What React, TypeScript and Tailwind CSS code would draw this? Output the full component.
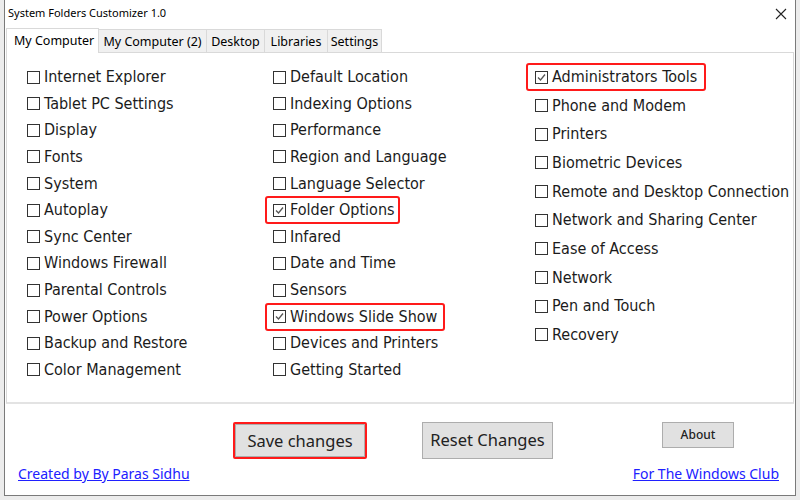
import React from "react";

const col1 = [
  "Internet Explorer",
  "Tablet PC Settings",
  "Display",
  "Fonts",
  "System",
  "Autoplay",
  "Sync Center",
  "Windows Firewall",
  "Parental Controls",
  "Power Options",
  "Backup and Restore",
  "Color Management",
];

type It = { label: string; checked?: boolean; hl?: string };

const col2: It[] = [
  { label: "Default Location" },
  { label: "Indexing Options" },
  { label: "Performance" },
  { label: "Region and Language" },
  { label: "Language Selector" },
  { label: "Folder Options", checked: true, hl: "left-[-8px] right-[-5px]" },
  { label: "Infared" },
  { label: "Date and Time" },
  { label: "Sensors" },
  { label: "Windows Slide Show", checked: true, hl: "left-[-8px] right-[-8px]" },
  { label: "Devices and Printers" },
  { label: "Getting Started" },
];

const col3: It[] = [
  { label: "Administrators Tools", checked: true, hl: "left-[-9px] right-[-9px]" },
  { label: "Phone and Modem" },
  { label: "Printers" },
  { label: "Biometric Devices" },
  { label: "Remote and Desktop Connection" },
  { label: "Network and Sharing Center" },
  { label: "Ease of Access" },
  { label: "Network" },
  { label: "Pen and Touch" },
  { label: "Recovery" },
];

function Box({ checked }: { checked?: boolean }) {
  return (
    <span className="w-[13px] h-[13px] border border-[#333333] bg-white shrink-0 flex items-center justify-center">
      {checked && (
        <svg width="11" height="11" viewBox="0 0 11 11">
          <path d="M2 5.5 L4.5 8 L9 2.5" fill="none" stroke="#555555" strokeWidth="1.3" />
        </svg>
      )}
    </span>
  );
}

function Item({ it, tall }: { it: It; tall?: boolean }) {
  return (
    <div className={`relative inline-flex items-center ${tall ? "h-[28.67px]" : "h-[26.64px]"}`}>
      {it.hl && (
        <div
          className={`absolute top-1/2 -translate-y-1/2 h-[28px] border-[2.5px] border-[#ff1a1a] rounded-[3px] ${it.hl}`}
        />
      )}
      <Box checked={it.checked} />
      <span className="ml-[4px] text-[16px] leading-none text-[#1b1b1b] whitespace-nowrap font-['DejaVu_Sans_Condensed','DejaVu_Sans',sans-serif] [font-stretch:condensed]">
        {it.label}
      </span>
    </div>
  );
}

export default function App() {
  const tabs = [
    { t: "My Computer (2)", w: "w-[108px]" },
    { t: "Desktop", w: "w-[58px]" },
    { t: "Libraries", w: "w-[63px]" },
    { t: "Settings", w: "w-[54px]" },
  ];
  return (
    <div className="w-[800px] h-[500px] bg-[#ececec] font-['Noto_Sans',sans-serif]">
      <div className="ml-[4px] w-[792px] h-[496px] border-x border-b border-[#7a7a7a] bg-white flex flex-col">
        {/* title bar */}
        <div className="h-[27px] flex items-center justify-between pl-[3px] pr-[8px]">
          <span className="text-[11px] text-black">System Folders Customizer 1.0</span>
          <svg width="12" height="12" viewBox="0 0 12 12">
            <path d="M1 1 L11 11 M11 1 L1 11" stroke="#222" strokeWidth="1.1" />
          </svg>
        </div>
        {/* tabs */}
        <div className="h-[25px] flex items-end pl-[1px] text-[12.5px] text-black">
          <div className="w-[93px] h-[25px] bg-white border-x border-t border-[#d9d9d9] flex items-center pl-[7px] pt-[1px] relative z-10 -mb-px">
            My Computer
          </div>
          {tabs.map((tb) => (
            <div
              key={tb.t}
              className={`${tb.w} h-[23px] pt-[2px] bg-[#f0f0f0] border-t border-r border-[#d9d9d9] flex items-center justify-center`}
            >
              {tb.t}
            </div>
          ))}
        </div>
        {/* panel */}
        <div className="mx-[1px] h-[352px] border-t border-l border-r border-[#d9d9d9] border-b-2 border-b-[#e3e3e3] bg-white flex pl-[20px] pt-[10.7px]">
          <div className="w-[246px] flex flex-col items-start">
            {col1.map((l) => (
              <Item key={l} it={{ label: l }} />
            ))}
          </div>
          <div className="w-[262px] flex flex-col items-start">
            {col2.map((it) => (
              <Item key={it.label} it={it} />
            ))}
          </div>
          <div className="flex flex-col items-start -mt-px">
            {col3.map((it) => (
              <Item key={it.label} it={it} tall />
            ))}
          </div>
        </div>
        {/* footer */}
        <div className="flex-1 flex flex-col">
          <div className="flex items-start mt-[18px]">
            <div className="ml-[228px] w-[134px] h-[37px] border-[2.5px] border-[#ff1a1a] rounded-[2px] p-0">
              <div className="w-full h-full bg-[#e1e1e1] border border-[#adadad] flex items-center justify-center pt-[1px] text-[16.5px] text-[#222]">
                Save changes
              </div>
            </div>
            <div className="ml-[55px] w-[131px] h-[37px] bg-[#e1e1e1] border border-[#adadad] flex items-center justify-center text-[16.5px] text-[#222]">
              Reset Changes
            </div>
            <div className="ml-[109px] w-[72px] h-[26px] bg-[#e1e1e1] border border-[#adadad] flex items-center justify-center text-[12px] font-medium text-[#222]">
              About
            </div>
          </div>
          <div className="flex justify-between items-center mt-[4px] pl-[13px] pr-[16px] text-[14px] text-[#2020ff] underline">
            <span>Created by By Paras Sidhu</span>
            <span>For The Windows Club</span>
          </div>
        </div>
      </div>
    </div>
  );
}
